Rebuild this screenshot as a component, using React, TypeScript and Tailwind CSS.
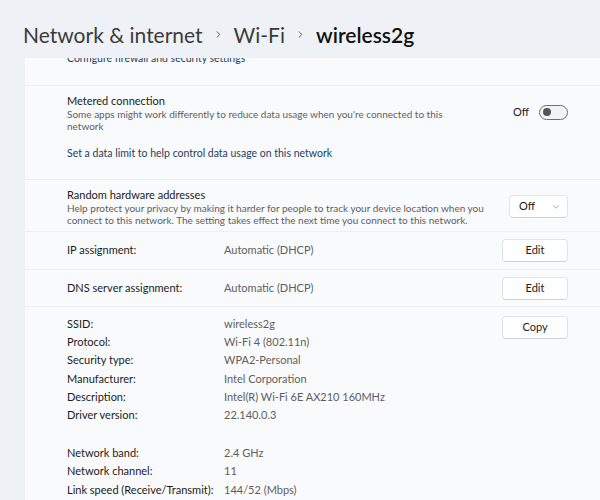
import React from 'react';
import { ChevronRight, ChevronDown } from 'lucide-react';

const font = { fontFamily: '"Segoe UI", Lato, "Noto Sans", sans-serif' };

interface InfoRow {
  label: string;
  value: string;
}

const details: InfoRow[] = [
  { label: 'SSID:', value: 'wireless2g' },
  { label: 'Protocol:', value: 'Wi-Fi 4 (802.11n)' },
  { label: 'Security type:', value: 'WPA2-Personal' },
  { label: 'Manufacturer:', value: 'Intel Corporation' },
  { label: 'Description:', value: 'Intel(R) Wi-Fi 6E AX210 160MHz' },
  { label: 'Driver version:', value: '22.140.0.3' },
];

const band: InfoRow[] = [
  { label: 'Network band:', value: '2.4 GHz' },
  { label: 'Network channel:', value: '11' },
  { label: 'Link speed (Receive/Transmit):', value: '144/52 (Mbps)' },
];

function WinButton({ children }: { children: React.ReactNode }) {
  return (
    <button className="w-[66px] h-[23px] rounded-[4px] bg-white border border-[#e3e3e3] border-b-[#d2d2d2] text-[11px] text-[#1b1b1b] flex items-center justify-center">
      {children}
    </button>
  );
}

export default function App() {
  return (
    <div className="w-[600px] h-[500px] bg-[#eef2f7] overflow-hidden flex flex-col" style={font}>
      <div className="h-[58px] shrink-0 flex items-center pl-[23px] pt-[10px] text-[21px] leading-none">
        <span className="text-[#3b3b3b]">Network &amp; internet</span>
        <ChevronRight className="w-[11px] h-[11px] mx-[10px] text-[#555]" strokeWidth={2} />
        <span className="text-[#3b3b3b]">Wi-Fi</span>
        <ChevronRight className="w-[11px] h-[11px] mx-[10px] text-[#555]" strokeWidth={2} />
        <span className="text-[#111] font-semibold">wireless2g</span>
      </div>

      <div className="ml-[25px] flex-1 bg-[#f9fafc] overflow-hidden text-[#1b1b1b]">
        <div className="h-[28px] pl-[42px] border-b border-[#eceef1] overflow-hidden">
          <div className="mt-[-7px] text-[10.5px] text-[#1f3d63]">Configure firewall and security settings</div>
        </div>

        <div className="h-[94px] pl-[42px] pr-[32px] pt-[8px] border-b border-[#eceef1]">
          <div className="flex items-start justify-between">
            <div className="w-[430px]">
              <div className="text-[11px] leading-[14px]">Metered connection</div>
              <div className="w-[380px] text-[10px] leading-[12px] text-[#5e5e5e]">
                Some apps might work differently to reduce data usage when you're connected to this network
              </div>
            </div>
            <div className="flex items-center gap-[10px] mt-[10px]">
              <span className="text-[11px]">Off</span>
              <div className="w-[29px] h-[15px] rounded-full border border-[#6e6e6e] flex items-center pl-[3px] bg-[#f3f3f3]">
                <div className="w-[8px] h-[8px] rounded-full bg-[#555]" />
              </div>
            </div>
          </div>
          <div className="mt-[14px] text-[10.5px] text-[#1f3d63]">
            Set a data limit to help control data usage on this network
          </div>
        </div>

        <div className="h-[52px] pl-[42px] pr-[32px] pt-[8px] border-b border-[#eceef1] flex items-start justify-between">
          <div className="w-[432px]">
            <div className="text-[11px] leading-[14px]">Random hardware addresses</div>
            <div className="text-[10px] leading-[12px] text-[#5e5e5e]">
              Help protect your privacy by making it harder for people to track your device location when you connect to this network. The setting takes effect the next time you connect to this network.
            </div>
          </div>
          <div className="mt-[7px] w-[59px] h-[23px] rounded-[4px] bg-white border border-[#e3e3e3] border-b-[#d2d2d2] flex items-center justify-between pl-[9px] pr-[6px]">
            <span className="text-[11px]">Off</span>
            <ChevronDown className="w-[10px] h-[10px] text-[#777]" strokeWidth={1.5} />
          </div>
        </div>

        <div className="h-[38px] pl-[42px] pr-[32px] border-b border-[#eceef1] flex items-center">
          <span className="w-[157px] text-[11px]">IP assignment:</span>
          <span className="flex-1 text-[11px] text-[#5e5e5e]">Automatic (DHCP)</span>
          <WinButton>Edit</WinButton>
        </div>

        <div className="h-[37px] pl-[42px] pr-[32px] border-b border-[#eceef1] flex items-center">
          <span className="w-[157px] text-[11px]">DNS server assignment:</span>
          <span className="flex-1 text-[11px] text-[#5e5e5e]">Automatic (DHCP)</span>
          <WinButton>Edit</WinButton>
        </div>

        <div className="pl-[42px] pr-[32px] pt-[8px] flex items-start">
          <div className="flex-1">
            {details.map((r) => (
              <div key={r.label} className="flex h-[18.3px] items-center text-[11px]">
                <span className="w-[157px]">{r.label}</span>
                <span className="text-[#5e5e5e]">{r.value}</span>
              </div>
            ))}
            <div className="h-[19px]" />
            {band.map((r) => (
              <div key={r.label} className="flex h-[18.4px] items-center text-[11px]">
                <span className="w-[157px]">{r.label}</span>
                <span className="text-[#5e5e5e]">{r.value}</span>
              </div>
            ))}
          </div>
          <div className="mt-[1px]">
            <WinButton>Copy</WinButton>
          </div>
        </div>
      </div>
    </div>
  );
}
